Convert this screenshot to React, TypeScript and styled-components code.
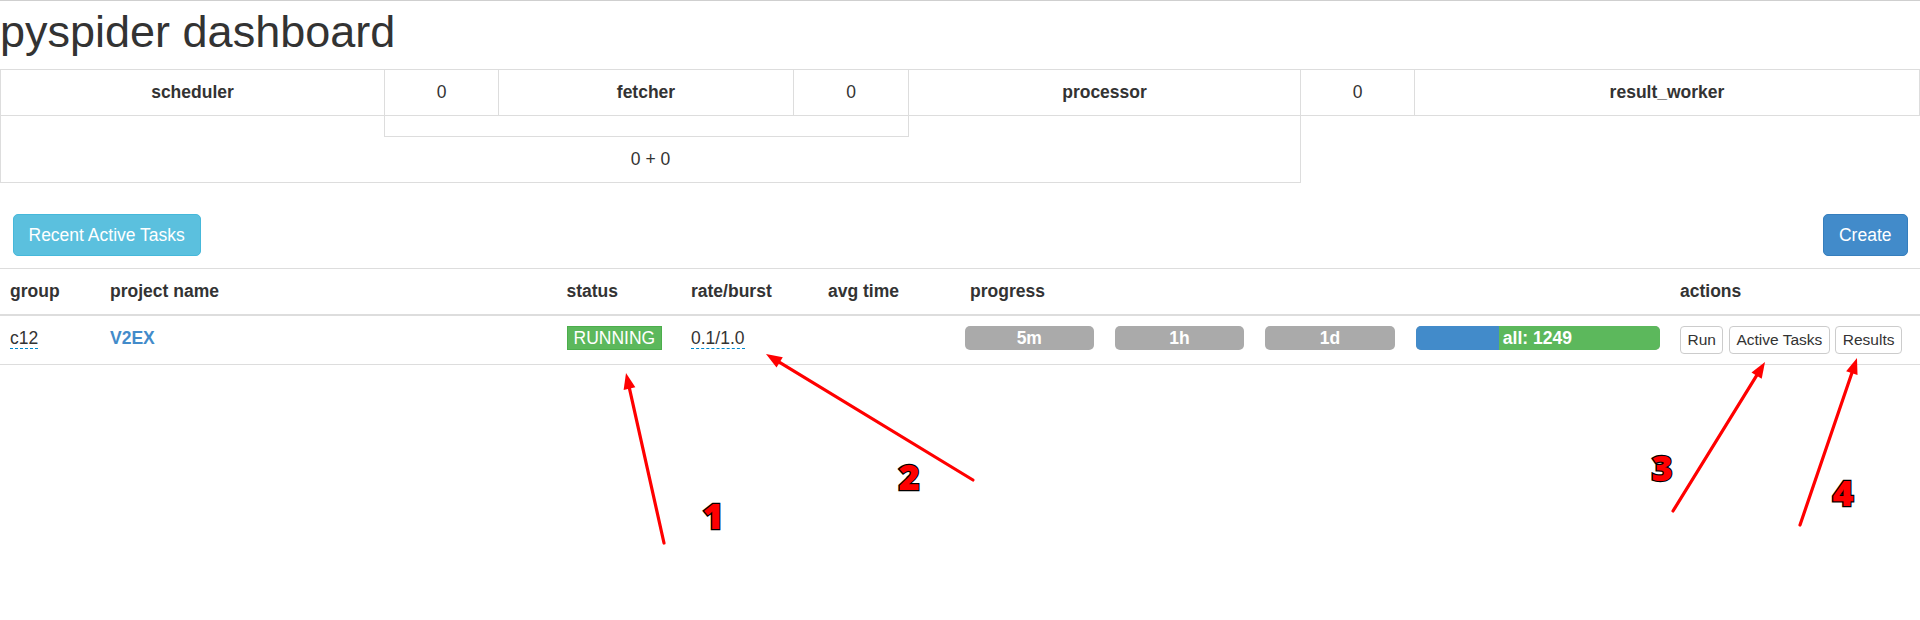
import React from 'react';
import styled, { createGlobalStyle } from 'styled-components';

const GlobalStyle = createGlobalStyle`
  html, body {
    margin: 0;
    padding: 0;
    background: #fff;
  }
  body {
    font-family: "Liberation Sans", Arial, sans-serif;
    font-size: 17.5px;
    line-height: 25px;
    color: #333;
  }
  * {
    box-sizing: border-box;
  }
`;

const counters = [
  { name: 'scheduler', value: 0 },
  { name: 'fetcher', value: 0 },
  { name: 'processor', value: 0 },
  { name: 'result_worker', value: null },
];

const progress = [
  { label: '5m', width: 129 },
  { label: '1h', width: 130 },
  { label: '1d', width: 130 },
];

const arrows = [
  { x1: 664, y1: 543, x2: 626, y2: 373 },
  { x1: 973, y1: 480, x2: 766, y2: 354 },
  { x1: 1673, y1: 511, x2: 1765, y2: 362 },
  { x1: 1800, y1: 525, x2: 1857, y2: 358 },
];

const marks = [
  { n: '1', x: 713, y: 529 },
  { n: '2', x: 909, y: 490 },
  { n: '3', x: 1662, y: 481 },
  { n: '4', x: 1843, y: 506 },
];

const arrowHead = (a: { x1: number; y1: number; x2: number; y2: number }) => {
  const dx = a.x2 - a.x1;
  const dy = a.y2 - a.y1;
  const len = Math.sqrt(dx * dx + dy * dy);
  const ux = dx / len;
  const uy = dy / len;
  const bx = a.x2 - ux * 16;
  const by = a.y2 - uy * 16;
  return {
    base: { x: bx + ux * 2, y: by + uy * 2 },
    points: `${a.x2},${a.y2} ${bx - uy * 6},${by + ux * 6} ${bx + uy * 6},${by - ux * 6}`,
  };
};

const App = () => (
  <Page>
    <GlobalStyle />
    <Title>pyspider dashboard</Title>

    <Counters>
      {counters.map((c) => (
        <React.Fragment key={c.name}>
          <CounterCell $bold>{c.name}</CounterCell>
          {c.value !== null && <CounterCell>{c.value}</CounterCell>}
        </React.Fragment>
      ))}
      <QueueCell>
        <QueueBox />
        <QueueTotal>0 + 0</QueueTotal>
      </QueueCell>
    </Counters>

    <Toolbar>
      <Button $variant="info">Recent Active Tasks</Button>
      <Button $variant="primary">Create</Button>
    </Toolbar>

    <Projects>
      <colgroup>
        <col style={{ width: 100 }} />
        <col style={{ width: 456.5 }} />
        <col style={{ width: 124.5 }} />
        <col style={{ width: 137 }} />
        <col style={{ width: 142 }} />
        <col style={{ width: 710 }} />
        <col style={{ width: 250 }} />
      </colgroup>
      <thead>
        <tr>
          <Th>group</Th>
          <Th>project name</Th>
          <Th>status</Th>
          <Th>rate/burst</Th>
          <Th>avg time</Th>
          <Th>progress</Th>
          <Th>actions</Th>
        </tr>
      </thead>
      <tbody>
        <tr>
          <Td>
            <Editable>c12</Editable>
          </Td>
          <Td>
            <ProjectLink>V2EX</ProjectLink>
          </Td>
          <Td>
            <StatusLabel>RUNNING</StatusLabel>
          </Td>
          <Td>
            <Editable>0.1/1.0</Editable>
          </Td>
          <Td />
          <ProgressCell>
            <Bars>
              {progress.map((p) => (
                <Bar key={p.label} $width={p.width}>
                  {p.label}
                </Bar>
              ))}
              <Bar $width={245}>
                <Segment $color="#428bca" style={{ width: '34%' }} />
                <Segment $color="#5cb85c" $grow>
                  all: 1249
                </Segment>
              </Bar>
            </Bars>
          </ProgressCell>
          <Td>
            <Actions>
              <SmallButton>Run</SmallButton>
              <SmallButton>Active Tasks</SmallButton>
              <SmallButton>Results</SmallButton>
            </Actions>
          </Td>
        </tr>
      </tbody>
    </Projects>

    <Annotations width="1920" height="620" viewBox="0 0 1920 620">
      {arrows.map((a, i) => {
        const h = arrowHead(a);
        return (
          <g key={i}>
            <line
              x1={a.x1}
              y1={a.y1}
              x2={h.base.x}
              y2={h.base.y}
              stroke="#ff0000"
              strokeWidth="3.2"
              strokeLinecap="round"
            />
            <polygon points={h.points} fill="#ff0000" />
          </g>
        );
      })}
      {marks.map((m) => (
        <MarkText key={m.n} x={m.x} y={m.y} textAnchor="middle">
          {m.n}
        </MarkText>
      ))}
    </Annotations>
  </Page>
);

const Page = styled.div`
  position: relative;
  width: 1920px;
  min-height: 620px;
  border-top: 1px solid #cfcfcf;
  overflow: hidden;
`;

const Title = styled.h1`
  margin: 6px 0 12px;
  font-size: 45px;
  font-weight: 500;
  line-height: 49.5px;
  color: #333;
`;

const Counters = styled.div`
  display: grid;
  grid-template-columns: 384px 114px 295px 115px 392px 114px 1fr;
  border-top: 1px solid #ddd;
  border-left: 1px solid #ddd;
`;

const CounterCell = styled.div<{ $bold?: boolean }>`
  padding: 10px;
  text-align: center;
  font-weight: ${(p) => (p.$bold ? 700 : 400)};
  border-right: 1px solid #ddd;
  border-bottom: 1px solid #ddd;
`;

const QueueCell = styled.div`
  grid-column: 1 / 6;
  display: grid;
  grid-template-columns: 383px 525px 1fr;
  grid-template-rows: 21px auto;
  border-right: 1px solid #ddd;
  border-bottom: 1px solid #ddd;
`;

const QueueBox = styled.div`
  grid-column: 2;
  border-left: 1px solid #ddd;
  border-right: 1px solid #ddd;
  border-bottom: 1px solid #ddd;
`;

const QueueTotal = styled.div`
  grid-column: 1 / -1;
  padding: 10px;
  text-align: center;
`;

const Toolbar = styled.div`
  display: flex;
  justify-content: space-between;
  padding: 0 12.5px;
  margin: 31.5px 0 12px;
`;

const Button = styled.button<{ $variant: 'info' | 'primary' }>`
  font-family: inherit;
  font-size: 17.5px;
  line-height: 25px;
  padding: 7.5px 15px;
  border-radius: 5px;
  color: #fff;
  border: 1px solid ${(p) => (p.$variant === 'info' ? '#46b8da' : '#357ebd')};
  background: ${(p) => (p.$variant === 'info' ? '#5bc0de' : '#428bca')};
`;

const Projects = styled.table`
  width: 1920px;
  table-layout: fixed;
  border-collapse: collapse;
  border-spacing: 0;
`;

const Th = styled.th`
  padding: 10px;
  text-align: left;
  font-weight: 700;
  line-height: 25px;
  vertical-align: bottom;
  border-top: 1px solid #ddd;
  border-bottom: 2px solid #ddd;
  white-space: nowrap;
`;

const Td = styled.td`
  padding: 10px;
  line-height: 25px;
  vertical-align: top;
  border-bottom: 1px solid #ddd;
  white-space: nowrap;
`;

const ProgressCell = styled(Td)`
  padding-left: 5px;
`;

const Editable = styled.span`
  border-bottom: 1px dashed #0088cc;
`;

const ProjectLink = styled.a`
  color: #428bca;
  font-weight: 700;
  text-decoration: none;
`;

const StatusLabel = styled.span`
  display: inline-block;
  padding: 0 6px;
  line-height: 22px;
  color: #fff;
  background: #5cb85c;
  border: 1px solid #4cae4c;
`;

const Bars = styled.div`
  display: flex;
  gap: 21px;
`;

const Bar = styled.div<{ $width: number }>`
  display: flex;
  justify-content: center;
  width: ${(p) => p.$width}px;
  height: 24px;
  line-height: 24px;
  border-radius: 5px;
  overflow: hidden;
  background: #aaa;
  color: #fff;
  font-weight: 700;
`;

const Segment = styled.div<{ $color: string; $grow?: boolean }>`
  flex: ${(p) => (p.$grow ? 1 : 'none')};
  padding-left: ${(p) => (p.$grow ? '4px' : '0')};
  background: ${(p) => p.$color};
  text-align: left;
`;

const Actions = styled.div`
  display: flex;
  gap: 5.5px;
`;

const SmallButton = styled.button`
  height: 28px;
  padding: 0 6.5px;
  font-family: inherit;
  font-size: 15.5px;
  line-height: 22px;
  color: #333;
  background: #fff;
  border: 1px solid #ccc;
  border-radius: 4px;
`;

const Annotations = styled.svg`
  position: absolute;
  top: -1px;
  left: 0;
  pointer-events: none;
`;

const MarkText = styled.text`
  font-family: "Open Sans", "DejaVu Sans", sans-serif;
  font-size: 36px;
  font-weight: 800;
  fill: #ff0000;
  stroke: #000;
  stroke-width: 2.5px;
  paint-order: stroke;
`;

export default App;
